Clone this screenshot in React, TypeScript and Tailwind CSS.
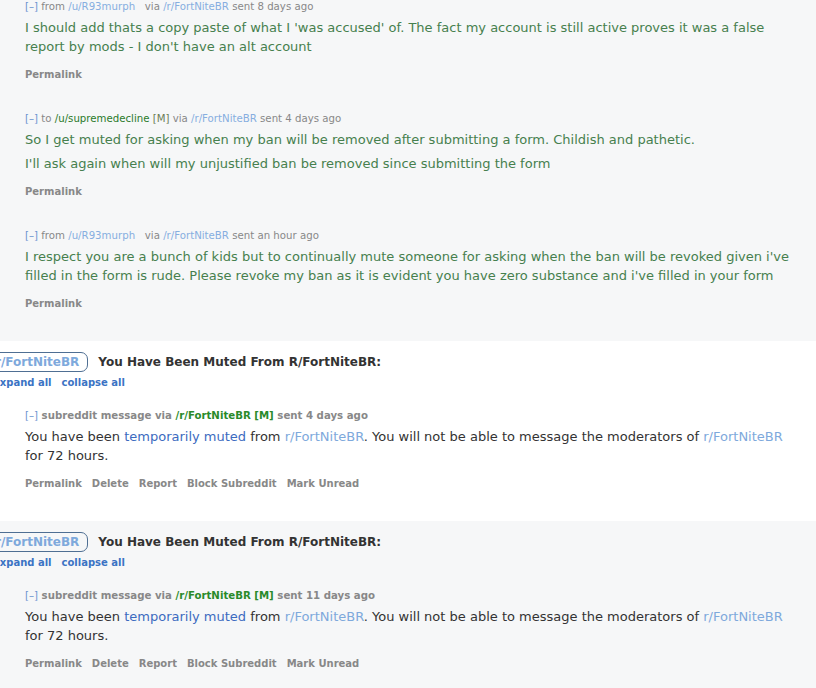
import React from 'react';

const FONT = { fontFamily: '"DejaVu Sans", Verdana, sans-serif' };

const Tag: React.FC<{ children: React.ReactNode }> = ({ children }) => (
  <span className="text-[#6a93d0]">{children}</span>
);

const Meta: React.FC<{ children: React.ReactNode }> = ({ children }) => (
  <div className="text-[10.2px] leading-[12px] text-[#888] whitespace-nowrap">{children}</div>
);

const Actions: React.FC<{ items: string[] }> = ({ items }) => (
  <div className="mt-[13px] flex gap-[10px] text-[10px] leading-[12px] font-bold text-[#888]">
    {items.map((a) => (
      <span key={a}>{a}</span>
    ))}
  </div>
);

const UserMessage: React.FC<{ meta: React.ReactNode; paragraphs: string[]; last?: boolean }> = ({
  meta,
  paragraphs,
  last,
}) => (
  <div className={`pl-[25px] ${last ? 'pb-[31px]' : 'pb-[32px]'}`}>
    <Meta>{meta}</Meta>
    <div className="mt-[5px] text-[13px] leading-[19px] text-[#46804e] pr-[20px]">
      {paragraphs.map((p, i) => (
        <p key={i} className={i > 0 ? 'mt-[5px]' : ''}>
          {p}
        </p>
      ))}
    </div>
    <Actions items={['Permalink']} />
  </div>
);

const MutedThread: React.FC<{ bg: string; sent: string }> = ({ bg, sent }) => (
  <div className={`${bg} pt-[11px] pb-[31px]`}>
    <div className="flex items-center gap-[10px]">
      <span className="-ml-[8px] h-[20px] flex items-center pl-[2px] pr-[8px] border border-[#4f6f93] rounded-r-[7px] text-[12px] font-bold text-[#7ea9dc]">
        r/FortNiteBR
      </span>
      <span className="text-[12px] font-bold text-[#333]">You Have Been Muted From R/FortNiteBR:</span>
    </div>
    <div className="mt-[5px] -ml-[7px] flex gap-[10px] text-[10px] leading-[12px] font-bold text-[#3b73c4]">
      <span>expand all</span>
      <span>collapse all</span>
    </div>
    <div className="pl-[25px] mt-[21px]">
      <div className="text-[10.2px] leading-[12px] font-bold text-[#888] whitespace-nowrap">
        <span className="font-normal text-[#6a93d0]">[–]</span> subreddit message via{' '}
        <span className="text-[#2a8a2a]">/r/FortNiteBR</span> <span className="text-[#2a8a2a]">[M]</span> sent {sent}
      </div>
      <div className="mt-[5px] text-[13px] leading-[19px] text-[#333] pr-[20px]">
        You have been <span className="text-[#3c6bc0]">temporarily muted</span> from{' '}
        <span className="text-[#7ea9dc]">r/FortNiteBR</span>. You will not be able to message the moderators of{' '}
        <span className="text-[#7ea9dc]">r/FortNiteBR</span> for 72 hours.
      </div>
      <Actions items={['Permalink', 'Delete', 'Report', 'Block Subreddit', 'Mark Unread']} />
    </div>
  </div>
);

export default function App() {
  return (
    <div style={FONT} className="w-[816px] h-[688px] overflow-hidden bg-white">
      <div className="bg-[#f6f7f8] pt-[1px]">
        <UserMessage
          meta={
            <>
              <Tag>[–]</Tag> from <span className="text-[#86aee0]">/u/R93murph</span>&nbsp;&nbsp; via{' '}
              <span className="text-[#86aee0]">/r/FortNiteBR</span> sent 8 days ago
            </>
          }
          paragraphs={[
            "I should add thats a copy paste of what I 'was accused' of. The fact my account is still active proves it was a false report by mods - I don't have an alt account",
          ]}
        />
        <UserMessage
          meta={
            <>
              <Tag>[–]</Tag> to <span className="text-[#2a7a2a]">/u/supremedecline</span>{' '}
              <span className="text-[#6b7d55]">[M]</span> via <span className="text-[#86aee0]">/r/FortNiteBR</span> sent 4
              days ago
            </>
          }
          paragraphs={[
            'So I get muted for asking when my ban will be removed after submitting a form. Childish and pathetic.',
            "I'll ask again when will my unjustified ban be removed since submitting the form",
          ]}
        />
        <UserMessage
          last
          meta={
            <>
              <Tag>[–]</Tag> from <span className="text-[#86aee0]">/u/R93murph</span>&nbsp;&nbsp; via{' '}
              <span className="text-[#86aee0]">/r/FortNiteBR</span> sent an hour ago
            </>
          }
          paragraphs={[
            "I respect you are a bunch of kids but to continually mute someone for asking when the ban will be revoked given i've filled in the form is rude. Please revoke my ban as it is evident you have zero substance and i've filled in your form",
          ]}
        />
      </div>
      <MutedThread bg="bg-white" sent="4 days ago" />
      <MutedThread bg="bg-[#f6f7f8]" sent="11 days ago" />
    </div>
  );
}
